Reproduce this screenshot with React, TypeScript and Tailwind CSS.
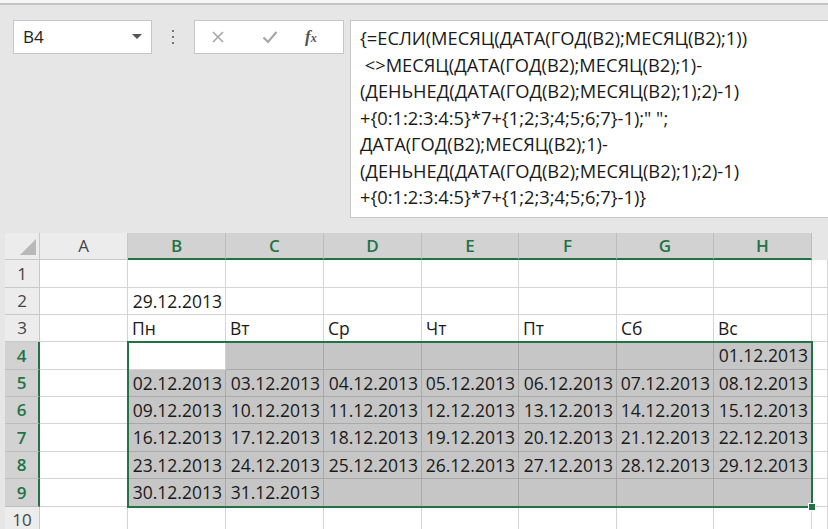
import React from 'react';

const COLS = ['A', 'B', 'C', 'D', 'E', 'F', 'G', 'H'];
const DAYS = ['Пн', 'Вт', 'Ср', 'Чт', 'Пт', 'Сб', 'Вс'];

const FORMULA = [
  '{=ЕСЛИ(МЕСЯЦ(ДАТА(ГОД(B2);МЕСЯЦ(B2);1))',
  ' <>МЕСЯЦ(ДАТА(ГОД(B2);МЕСЯЦ(B2);1)-',
  '(ДЕНЬНЕД(ДАТА(ГОД(B2);МЕСЯЦ(B2);1);2)-1)',
  '+{0:1:2:3:4:5}*7+{1;2;3;4;5;6;7}-1);" ";',
  'ДАТА(ГОД(B2);МЕСЯЦ(B2);1)-',
  '(ДЕНЬНЕД(ДАТА(ГОД(B2);МЕСЯЦ(B2);1);2)-1)',
  '+{0:1:2:3:4:5}*7+{1;2;3;4;5;6;7}-1)}',
];

const pad = (n: number) => (n < 10 ? '0' + n : '' + n);

// build the calendar rows 4..9 (Mon-first, December 2013 starts on Sunday)
function calendarRows() {
  const rows: string[][] = [];
  let day = 1 - 6;
  for (let w = 0; w < 6; w++) {
    const r: string[] = [];
    for (let d = 0; d < 7; d++) {
      r.push(day >= 1 && day <= 31 ? `${pad(day)}.12.2013` : '');
      day++;
    }
    rows.push(r);
  }
  return rows;
}

function Cell({
  text,
  align,
  selected,
  active,
}: {
  text?: string;
  align?: 'left' | 'right';
  selected?: boolean;
  active?: boolean;
}) {
  const bg = selected && !active ? 'bg-[#c6c6c6] border-[#a9a9a9]' : 'bg-white border-[#d4d4d4]';
  return (
    <div
      className={`flex items-center border-r border-b overflow-hidden whitespace-nowrap text-[17.5px] text-[#1a1a1a] ${bg} ${
        align === 'right' ? 'justify-end pr-[3px]' : 'pl-[4px]'
      }`}
    >
      {text}
    </div>
  );
}

export default function App() {
  const cal = calendarRows();
  const rows: { num: number; cells: { text: string; align: 'left' | 'right' }[] }[] = [];
  for (let r = 1; r <= 10; r++) {
    const cells = COLS.slice(1).map(() => ({ text: '', align: 'right' as const }));
    if (r === 2) cells[0].text = '29.12.2013';
    if (r === 3) DAYS.forEach((d, i) => (cells[i] = { text: d, align: 'left' }));
    if (r >= 4 && r <= 9) cal[r - 4].forEach((t, i) => (cells[i].text = t));
    rows.push({ num: r, cells });
  }

  return (
    <div className="w-[828px] h-[529px] overflow-hidden bg-[#e6e6e6]" style={{ fontFamily: '"Open Sans", Arial, sans-serif' }}>
      <div className="h-[5px] bg-[#f7f7f7] border-b-2 border-[#c3c3c3]" />

      {/* formula bar */}
      <div className="flex items-start pt-[15px] pl-[13px]">
        <div className="w-[139px] h-[34px] bg-white border border-[#c6c6c6] flex items-center justify-between pl-[9px] pr-[9px]">
          <span className="text-[17px] text-[#222]">B4</span>
          <svg width="10" height="6" viewBox="0 0 10 6">
            <path d="M0 0 L10 0 L5 5 Z" fill="#555" />
          </svg>
        </div>
        <div className="w-[42px] h-[34px] flex flex-col items-center justify-center gap-[4px]">
          <span className="w-[2px] h-[2px] bg-[#777]" />
          <span className="w-[2px] h-[2px] bg-[#777]" />
          <span className="w-[2px] h-[2px] bg-[#777]" />
        </div>
        <div className="w-[150px] h-[34px] bg-white border border-[#c6c6c6] flex items-center">
          <svg className="ml-[16px]" width="14" height="14" viewBox="0 0 14 14">
            <path d="M2 2 L12 12 M12 2 L2 12" stroke="#a6a6a6" strokeWidth="1.6" />
          </svg>
          <svg className="ml-[37px]" width="16" height="14" viewBox="0 0 16 14">
            <path d="M1.5 7.5 L6 12 L14.5 2" stroke="#a6a6a6" strokeWidth="2.2" fill="none" />
          </svg>
          <span
            className="ml-[27px] text-[17px] italic font-bold text-[#555]"
            style={{ fontFamily: '"Liberation Serif", "DejaVu Serif", serif' }}
          >
            f<span className="text-[12px]">x</span>
          </span>
        </div>
        <div className="ml-[6px] flex-1 -mr-[4px] h-[198px] bg-white border border-[#c6c6c6] pt-[4px] pl-[9px]">
          {FORMULA.map((l, i) => (
            <div key={i} className="leading-[26.5px] text-[18.3px] text-[#1a1a1a] whitespace-pre">
              {l}
            </div>
          ))}
        </div>
      </div>

      {/* sheet */}
      <div className="mt-[15px] ml-[5px] relative grid grid-cols-[35px_88px_98px_98px_98px_97px_98px_97px_98px_16px] grid-rows-[27px_28px_27px_27px_28px_27px_27px_28px_27px_28px_27px]">
        {/* corner */}
        <div className="bg-[#ececec] border-r border-b border-[#c8c8c8] flex items-end justify-end pr-[3px] pb-[4px]">
          <svg width="16" height="16" viewBox="0 0 16 16">
            <path d="M16 0 L16 16 L0 16 Z" fill="#b8b8b8" />
          </svg>
        </div>
        {COLS.map((c, i) =>
          i === 0 ? (
            <div key={c} className="bg-[#ececec] border-r border-b border-[#c8c8c8] flex items-center justify-center text-[17px] text-[#444]">
              {c}
            </div>
          ) : (
            <div
              key={c}
              className="bg-[#d2d2d2] border-r border-[#bdbdbd] border-b-2 border-b-[#217346] flex items-center justify-center text-[17px] font-semibold text-[#217346]"
            >
              {c}
            </div>
          )
        )}
        <div className="bg-[#e6e6e6]" />

        {rows.map((row) => {
          const sel = row.num >= 4 && row.num <= 9;
          return (
            <React.Fragment key={row.num}>
              <div
                className={`flex items-center justify-center text-[17px] ${
                  sel
                    ? 'bg-[#d2d2d2] border-b border-[#bdbdbd] border-r-2 border-r-[#217346] text-[#217346] font-semibold'
                    : 'bg-[#ececec] border-b border-r border-[#c8c8c8] text-[#444]'
                }`}
              >
                {row.num}
              </div>
              <Cell />
              {row.cells.map((c, i) => (
                <Cell key={i} text={c.text} align={c.align} selected={sel} active={row.num === 4 && i === 0} />
              ))}
              <Cell />
            </React.Fragment>
          );
        })}

        {/* selection frame B4:H9 */}
        <div className="absolute left-[122px] top-[108px] w-[686px] h-[167px] border-2 border-[#217346] pointer-events-none">
          <div className="absolute -right-[5px] -bottom-[5px] w-[8px] h-[8px] bg-[#217346] border border-white" />
        </div>
      </div>
    </div>
  );
}
